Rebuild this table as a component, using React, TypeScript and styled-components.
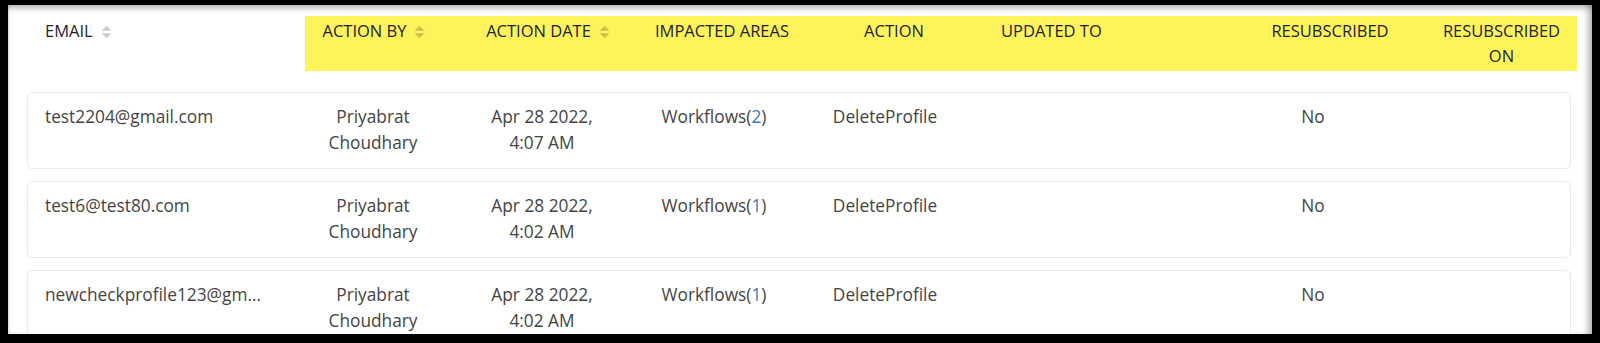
import styled, { createGlobalStyle } from 'styled-components'

const GlobalStyle = createGlobalStyle`
   html, body {
      margin: 0;
      padding: 0;
      background: #000;
   }
   body {
      font-family: 'Open Sans', 'Liberation Sans', sans-serif;
   }
`

const HEAD_COLS = '278px 138px 210px 138px 206px 263px 140px 177px'
const ROW_COLS = '246px 164px 174px 170px 172px 239px 206px 137px'

const Frame = styled.div`
   width: 1600px;
   height: 343px;
   box-sizing: border-box;
   padding: 5px 8px 9px 8px;
   background: #000;
`

const Screen = styled.div`
   height: 100%;
   box-sizing: border-box;
   padding: 11px 21px 0 19px;
   background: #fff;
   overflow: hidden;
   box-shadow:
      inset 0 6px 6px -3px rgba(0, 0, 0, 0.28),
      inset -7px 0 6px -3px rgba(0, 0, 0, 0.28),
      inset 2px 0 2px -1px rgba(0, 0, 0, 0.12);
`

const HeadRow = styled.div`
   display: grid;
   grid-template-columns: ${HEAD_COLS};
   margin-bottom: 21px;
`

const HeadCell = styled.div<{ $highlight?: boolean; $align?: string; $pad?: string }>`
   padding: ${(p) => p.$pad || '3px 0'};
   background: ${(p) => (p.$highlight ? '#fff35c' : 'transparent')};
   text-align: ${(p) => p.$align || 'center'};
   font-size: 16.5px;
   line-height: 24.5px;
   color: #1c2433;
   text-transform: uppercase;
`

const SortIcon = styled.svg`
   width: 11px;
   height: 14px;
   margin-left: 8px;
   vertical-align: -2px;
   fill: rgba(0, 0, 0, 0.2);
`

const Card = styled.div`
   display: grid;
   grid-template-columns: ${ROW_COLS};
   padding: 11px 17px 13px 17px;
   margin-bottom: 12px;
   border: 1px solid #ebebeb;
   border-radius: 5px;
   background: #fff;
`

const Cell = styled.div<{ $align?: string; $pad?: string }>`
   padding: ${(p) => p.$pad || '0 8px'};
   text-align: ${(p) => p.$align || 'center'};
   font-size: 17.3px;
   line-height: 25.5px;
   color: #444;
`

const EmailCell = styled(Cell)`
   padding: 0 22px 0 0;
   white-space: nowrap;
   overflow: hidden;
   text-overflow: ellipsis;
`

const Count = styled.span`
   color: #3b78c2;
`

const Sort = () => (
   <SortIcon viewBox="0 0 11 14">
      <path d="M0.5 5.8 L5.5 0.8 L10.5 5.8 Z" />
      <path d="M0.5 8.2 L5.5 13.2 L10.5 8.2 Z" />
   </SortIcon>
)

const rows = [
   { email: 'test2204@gmail.com', time: '4:07 AM', count: 2 },
   { email: 'test6@test80.com', time: '4:02 AM', count: 1 },
   { email: 'newcheckprofile123@gmail.com', time: '4:02 AM', count: 1 },
]

const App = () => {
   return (
      <Frame>
         <GlobalStyle />
         <Screen>
            <HeadRow>
               <HeadCell $align="left" $pad="3px 0 3px 18px">
                  Email
                  <Sort />
               </HeadCell>
               <HeadCell $highlight>
                  Action By
                  <Sort />
               </HeadCell>
               <HeadCell $highlight>
                  Action Date
                  <Sort />
               </HeadCell>
               <HeadCell $highlight>Impacted Areas</HeadCell>
               <HeadCell $highlight>Action</HeadCell>
               <HeadCell $highlight $align="left" $pad="3px 0 3px 4px">
                  Updated To
               </HeadCell>
               <HeadCell $highlight>Resubscribed</HeadCell>
               <HeadCell $highlight $pad="3px 8px 3px 34px">
                  Resubscribed On
               </HeadCell>
            </HeadRow>

            {rows.map((row) => (
               <Card key={row.email}>
                  <EmailCell $align="left">{row.email}</EmailCell>
                  <Cell>Priyabrat Choudhary</Cell>
                  <Cell $pad="0 30px">Apr 28 2022, {row.time}</Cell>
                  <Cell>
                     Workflows(<Count>{row.count}</Count>)
                  </Cell>
                  <Cell>DeleteProfile</Cell>
                  <Cell />
                  <Cell>No</Cell>
                  <Cell />
               </Card>
            ))}
         </Screen>
      </Frame>
   )
}

export default App
